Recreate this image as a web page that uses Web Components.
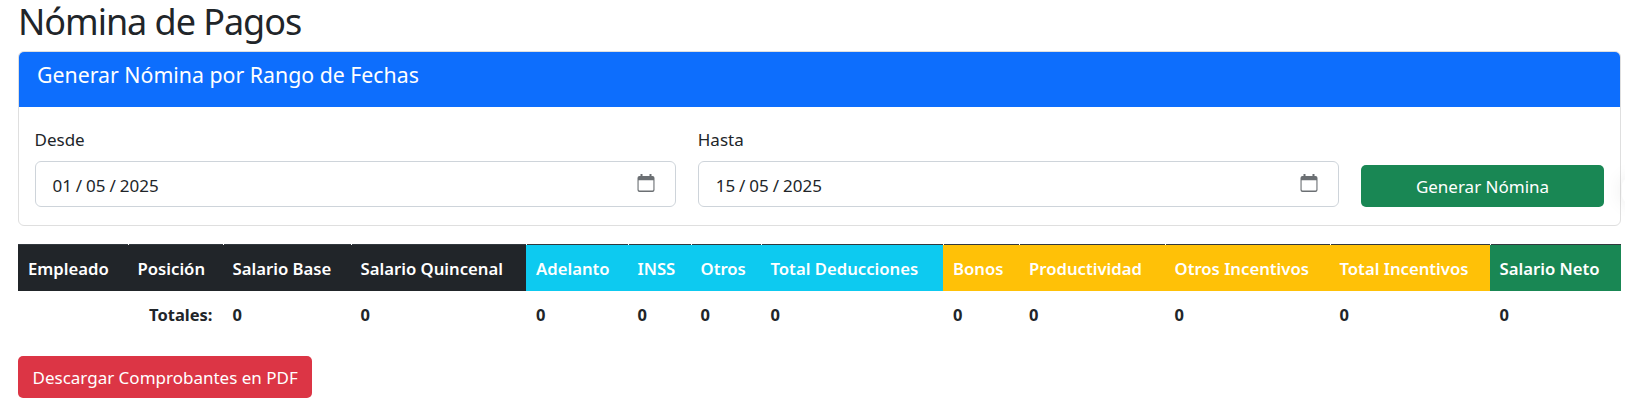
<!DOCTYPE html>
<html lang="es">
<head>
<meta charset="utf-8">
<title>Nómina de Pagos</title>
<style>
  html, body { margin: 0; background: #fff; }
  body { font-family: "Noto Sans", "Liberation Sans", sans-serif; color: #212529; }
</style>
</head>
<body>
<payroll-page>
  <payroll-card heading="Generar Nómina por Rango de Fechas">
    <date-field label="Desde" value="01 / 05 / 2025"></date-field>
    <date-field label="Hasta" value="15 / 05 / 2025"></date-field>
    <app-button slot="action" variant="success" wide>Generar Nómina</app-button>
  </payroll-card>
  <payroll-table></payroll-table>
  <app-button variant="danger">Descargar Comprobantes en PDF</app-button>
</payroll-page>
<edge-tab></edge-tab>

<script>
class PayrollPage extends HTMLElement {
  constructor() {
    super();
    const shadow = this.attachShadow({ mode: 'open' });
    shadow.innerHTML = `
      <style>
        :host { display: block; padding: 0 4px 0 18px; }
        h1 {
          margin: 0 0 7px;
          height: 44px;
          font-size: 36px;
          font-weight: 400;
          line-height: 43px;
          letter-spacing: -1.05px;
          color: #212529;
        }
        .stack { display: flex; flex-direction: column; gap: 18px; }
      </style>
      <h1>Nómina de Pagos</h1>
      <div class="stack">
        <slot></slot>
      </div>
    `;
  }
}
customElements.define('payroll-page', PayrollPage);

class PayrollCard extends HTMLElement {
  constructor() {
    super();
    const shadow = this.attachShadow({ mode: 'open' });
    shadow.innerHTML = `
      <style>
        :host {
          display: block;
          box-sizing: border-box;
          border: 1px solid #dfdfdf;
          border-radius: 6px;
          overflow: hidden;
          background: #fff;
        }
        header {
          height: 55px;
          box-sizing: border-box;
          padding: 0 0 11px 18px;
          display: flex;
          align-items: center;
          background: #0d6efd;
          color: #fff;
          font-size: 21.3px;
        }
        .body {
          display: flex;
          align-items: flex-end;
          gap: 22px;
          padding: 21px 16px 18px 15.5px;
        }
        .action { flex: 0 0 243px; display: flex; }
      </style>
      <header></header>
      <div class="body">
        <slot></slot>
        <div class="action"><slot name="action"></slot></div>
      </div>
    `;
    shadow.querySelector('header').textContent = this.getAttribute('heading');
  }
}
customElements.define('payroll-card', PayrollCard);

class DateField extends HTMLElement {
  constructor() {
    super();
    const shadow = this.attachShadow({ mode: 'open' });
    shadow.innerHTML = `
      <style>
        :host { display: block; flex: 1 1 0; min-width: 0; }
        label { display: block; font-size: 17px; line-height: 24px; margin-bottom: 9px; }
        .control {
          box-sizing: border-box;
          height: 46px;
          display: flex;
          align-items: center;
          justify-content: space-between;
          padding: 2.5px 20px 0 17px;
          border: 1px solid #ced4da;
          border-radius: 6px;
          background: #fff;
          font-size: 17px;
          word-spacing: -0.5px;
        }
        svg { width: 18px; height: 18px; margin-top: -4.5px; fill: #6b6f73; }
      </style>
      <label></label>
      <div class="control">
        <span class="value"></span>
        <svg viewBox="0 0 18 18"><path fill-rule="evenodd" d="M2.5 2h1V0h2v2h7V0h2v2h1a2 2 0 0 1 2 2v12a2 2 0 0 1-2 2h-13a2 2 0 0 1-2-2V4a2 2 0 0 1 2-2zM1.6 6.2v9.2a1 1 0 0 0 1 1h12.8a1 1 0 0 0 1-1V6.2z"/></svg>
      </div>
    `;
    shadow.querySelector('label').textContent = this.getAttribute('label');
    shadow.querySelector('.value').textContent = this.getAttribute('value');
  }
}
customElements.define('date-field', DateField);

class AppButton extends HTMLElement {
  constructor() {
    super();
    const shadow = this.attachShadow({ mode: 'open' });
    shadow.innerHTML = `
      <style>
        :host { display: inline-flex; align-self: flex-start; }
        :host([wide]) { display: flex; flex: 1; }
        button {
          flex: 1;
          height: 42px;
          padding: 0 14.5px;
          border: 0;
          border-radius: 5px;
          color: #fff;
          font: 400 17px "Noto Sans", "Liberation Sans", sans-serif;
          white-space: nowrap;
        }
        :host([variant="success"]) button { background: #198754; }
        :host([variant="danger"]) button { background: #dc3545; }
      </style>
      <button type="button"><slot></slot></button>
    `;
  }
}
customElements.define('app-button', AppButton);

// floating tab cut off by the right edge of the window
class EdgeTab extends HTMLElement {
  constructor() {
    super();
    const shadow = this.attachShadow({ mode: 'open' });
    shadow.innerHTML = `
      <style>
        :host {
          position: fixed;
          top: 178px;
          right: -20px;
          width: 23px;
          height: 25px;
          border-radius: 8px;
          background: #fff;
          box-shadow: 0 0 20px rgba(0, 0, 0, .09);
        }
      </style>
    `;
  }
}
customElements.define('edge-tab', EdgeTab);

const COLUMNS = [
  ['Empleado', 109.5, 'dark'],
  ['Posición', 95, 'dark'],
  ['Salario Base', 128, 'dark'],
  ['Salario Quincenal', 175.5, 'dark'],
  ['Adelanto', 101.5, 'info'],
  ['INSS', 63, 'info'],
  ['Otros', 70, 'info'],
  ['Total Deducciones', 182.5, 'info'],
  ['Bonos', 76, 'warning'],
  ['Productividad', 145.5, 'warning'],
  ['Otros Incentivos', 165, 'warning'],
  ['Total Incentivos', 160, 'warning'],
  ['Salario Neto', 131.5, 'success']
];

class PayrollTable extends HTMLElement {
  constructor() {
    super();
    const shadow = this.attachShadow({ mode: 'open' });
    const cols = COLUMNS.map(c => `<col style="width:${c[1]}px">`).join('');
    const heads = COLUMNS.map(c => `<th class="${c[2]}">${c[0]}</th>`).join('');
    const totals = COLUMNS.slice(2).map(() => '<td>0</td>').join('');
    shadow.innerHTML = `
      <style>
        :host { display: block; }
        table {
          width: 1602px;
          table-layout: fixed;
          border-collapse: separate;
          border-spacing: 0;
          font-size: 16.7px;
          font-weight: 600;
        }
        th {
          height: 47px;
          padding: 1px 0 0 10px;
          box-sizing: border-box;
          text-align: left;
          color: #fff;
          font-weight: 600;
          white-space: nowrap;
          background-image:
            linear-gradient(#fff, #fff),
            linear-gradient(#32383e, #32383e);
          background-size: 1px 1px, 100% 1px;
          background-position: 0 0;
          background-repeat: no-repeat;
        }
        th:first-child { background-size: 0 0, 100% 1px; }
        .dark { background-color: #212529; }
        .info { background-color: #0dcaf0; }
        .warning { background-color: #ffc107; }
        .success { background-color: #198754; }
        td { height: 47px; padding: 0 0 0 10px; box-sizing: border-box; color: #212529; font-weight: 700; font-size: 16.5px; }
        td.label { text-align: right; padding-right: 10px; }
      </style>
      <table>
        <colgroup>${cols}</colgroup>
        <thead><tr>${heads}</tr></thead>
        <tbody><tr><td colspan="2" class="label">Totales:</td>${totals}</tr></tbody>
      </table>
    `;
  }
}
customElements.define('payroll-table', PayrollTable);
</script>
</body>
</html>
